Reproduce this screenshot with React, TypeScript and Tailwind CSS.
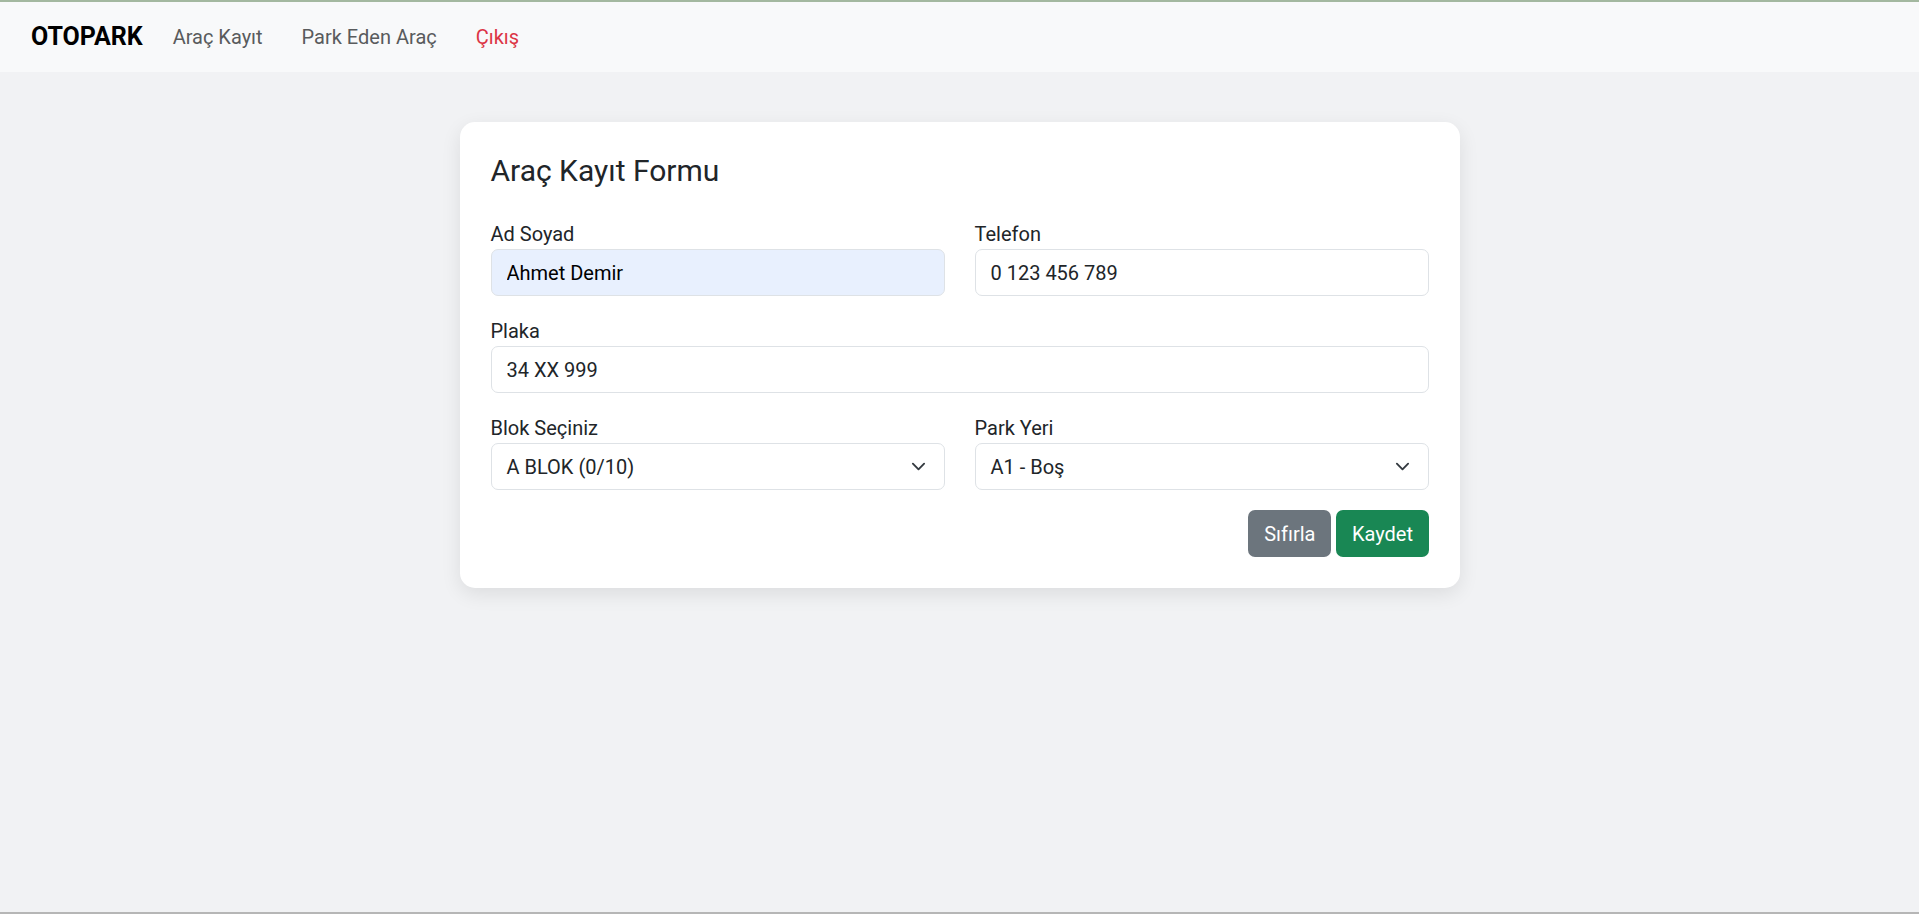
import React from "react";

function Chevron() {
  return (
    <svg width="15" height="15" viewBox="0 0 16 16" fill="none" className="shrink-0">
      <path d="m2 5 6 6 6-6" stroke="#343a40" strokeWidth="2" strokeLinecap="round" strokeLinejoin="round" />
    </svg>
  );
}

function Label({ children }: { children: React.ReactNode }) {
  return <div className="text-[20px] leading-[30px] text-[#212529]">{children}</div>;
}

function TextInput({ value, autofill }: { value: string; autofill?: boolean }) {
  return (
    <input
      readOnly
      value={value}
      className={
        "block w-full h-[47px] rounded-[7px] border border-[#dee2e6] px-[15px] text-[20px] outline-none " +
        (autofill ? "bg-[#e8f0fe] text-[#000]" : "bg-white text-[#212529]")
      }
    />
  );
}

function SelectBox({ value }: { value: string }) {
  return (
    <div className="flex h-[47px] w-full items-center justify-between rounded-[7px] border border-[#dee2e6] bg-white pl-[15px] pr-[17.5px] text-[20px] text-[#212529]">
      <span>{value}</span>
      <Chevron />
    </div>
  );
}

export default function App() {
  return (
    <div className="flex h-[914px] flex-col overflow-hidden bg-[#f1f2f4] font-['Roboto',sans-serif]">
      <div className="h-[2px] shrink-0 bg-[#a3b8a0]" />
      <nav className="flex h-[70px] shrink-0 items-center bg-[#f8f9fa] pl-[31px]">
        <span className="mr-[30px] text-[25px] font-bold text-black">OTOPARK</span>
        <div className="flex items-center gap-[39px] text-[20px]">
          <span className="text-[#595b5d]">Araç Kayıt</span>
          <span className="text-[#595b5d]">Park Eden Araç</span>
          <span className="text-[#dc3545]">Çıkış</span>
        </div>
      </nav>
      <main className="flex-1 pt-[50px]">
        <div className="mx-auto w-[1000px] rounded-[15px] bg-white px-[31px] pb-[31px] pt-[31px] shadow-[0_6px_20px_rgba(0,0,0,0.09)]">
          <h3 className="mb-[30px] text-[30px] font-normal leading-[36px] text-[#212529]">Araç Kayıt Formu</h3>
          <div className="flex flex-col gap-[20px]">
            <div className="grid grid-cols-2 gap-x-[30px]">
              <div>
                <Label>Ad Soyad</Label>
                <TextInput value="Ahmet Demir" autofill />
              </div>
              <div>
                <Label>Telefon</Label>
                <TextInput value="0 123 456 789" />
              </div>
            </div>
            <div>
              <Label>Plaka</Label>
              <TextInput value="34 XX 999" />
            </div>
            <div className="grid grid-cols-2 gap-x-[30px]">
              <div>
                <Label>Blok Seçiniz</Label>
                <SelectBox value="A BLOK (0/10)" />
              </div>
              <div>
                <Label>Park Yeri</Label>
                <SelectBox value="A1 - Boş" />
              </div>
            </div>
          </div>
          <div className="mt-[20px] flex justify-end gap-[5px]">
            <button className="h-[47px] rounded-[7px] bg-[#6c757d] px-[16px] text-[20px] text-white">Sıfırla</button>
            <button className="h-[47px] rounded-[7px] bg-[#198754] px-[15.5px] text-[20px] text-white">Kaydet</button>
          </div>
        </div>
      </main>
      <div className="h-[2px] shrink-0 bg-[#b6b6b6]" />
    </div>
  );
}
